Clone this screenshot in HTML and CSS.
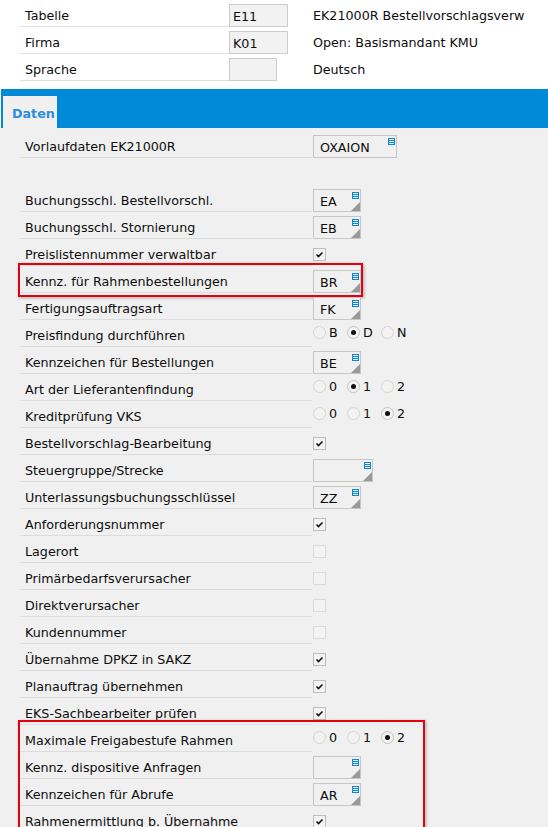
FILE: index.html
```html
<!DOCTYPE html>
<html lang="de">

<head>
  <meta charset="UTF-8">
  <title>Parameter EK21000R</title>
  <link rel="stylesheet" href="styles.css">
</head>

<body>
  <div id="head">
    <div class="hrow">
      <div class="hlabel">Tabelle</div>
      <div class="hcell"><div class="hbox">E11</div></div>
      <div class="hdesc">EK21000R Bestellvorschlagsverw</div>
    </div>
    <div class="hrow">
      <div class="hlabel">Firma</div>
      <div class="hcell"><div class="hbox">K01</div></div>
      <div class="hdesc">Open: Basismandant KMU</div>
    </div>
    <div class="hrow">
      <div class="hlabel">Sprache</div>
      <div class="hcell"><div class="hbox small"></div></div>
      <div class="hdesc">Deutsch</div>
    </div>
  </div>

  <div id="tab-bar">
    <div class="tab">Daten</div>
  </div>

  <div id="content">
    <!-- rows are rendered by the script below -->
  </div>

  <script>
    const rows = [
      { label: 'Vorlaufdaten EK21000R', type: 'box', value: 'OXAION', width: 84, noCorner: true },
      { type: 'blank' },
      { label: 'Buchungsschl. Bestellvorschl.', type: 'box', value: 'EA' },
      { label: 'Buchungsschl. Stornierung', type: 'box', value: 'EB' },
      { label: 'Preislistennummer verwaltbar', type: 'check', checked: true },
      { label: 'Kennz. für Rahmenbestellungen', type: 'box', value: 'BR', mark: 1 },
      { label: 'Fertigungsauftragsart', type: 'box', value: 'FK' },
      { label: 'Preisfindung durchführen', type: 'radio', options: ['B', 'D', 'N'], selected: 'D' },
      { label: 'Kennzeichen für Bestellungen', type: 'box', value: 'BE' },
      { label: 'Art der Lieferantenfindung', type: 'radio', options: ['0', '1', '2'], selected: '1' },
      { label: 'Kreditprüfung VKS', type: 'radio', options: ['0', '1', '2'], selected: '2' },
      { label: 'Bestellvorschlag-Bearbeitung', type: 'check', checked: true },
      { label: 'Steuergruppe/Strecke', type: 'box', value: '', width: 60 },
      { label: 'Unterlassungsbuchungsschlüssel', type: 'box', value: 'ZZ' },
      { label: 'Anforderungsnummer', type: 'check', checked: true },
      { label: 'Lagerort', type: 'check', checked: false },
      { label: 'Primärbedarfsverursacher', type: 'check', checked: false },
      { label: 'Direktverursacher', type: 'check', checked: false },
      { label: 'Kundennummer', type: 'check', checked: false },
      { label: 'Übernahme DPKZ in SAKZ', type: 'check', checked: true },
      { label: 'Planauftrag übernehmen', type: 'check', checked: true },
      { label: 'EKS-Sachbearbeiter prüfen', type: 'check', checked: true },
      { label: 'Maximale Freigabestufe Rahmen', type: 'radio', options: ['0', '1', '2'], selected: '2', mark: 2 },
      { label: 'Kennz. dispositive Anfragen', type: 'box', value: '', mark: 2 },
      { label: 'Kennzeichen für Abrufe', type: 'box', value: 'AR', mark: 2 },
      { label: 'Rahmenermittlung b. Übernahme', type: 'check', checked: true, mark: 2 }
    ];

    const listIcon = `<svg class="list-icon" width="7" height="7" viewBox="0 0 7 7">
        <rect x="0.5" y="0.5" width="6" height="6" fill="none" stroke="#0a86da"/>
        <path d="M0 2.5H7M0 4.5H7" stroke="#0a86da"/>
      </svg>`;

    const checkMark = `<svg width="11" height="11" viewBox="0 0 11 11">
        <path d="M2.5 5.5L4.5 7.5L8.5 3.5" fill="none" stroke="#111" stroke-width="1.6"/>
      </svg>`;

    function renderControl(row) {
      if (row.type === 'box') {
        return `<div class="box" style="width: ${row.width || 48}px">
            ${row.value}${listIcon}${row.noCorner ? '' : '<span class="corner"></span>'}
          </div>`;
      }
      if (row.type === 'check') {
        return `<div class="check ${row.checked ? 'on' : ''}">${row.checked ? checkMark : ''}</div>`;
      }
      if (row.type === 'radio') {
        return `<div class="radios">` + row.options.map(o => `
            <div class="opt"><span class="radio ${o === row.selected ? 'on' : ''}"></span>${o}</div>`).join('') +
          `</div>`;
      }
      return '';
    }

    function renderRow(row) {
      const rowDiv = document.createElement('div');
      rowDiv.classList.add('row');
      if (row.type === 'blank') {
        rowDiv.classList.add('blank');
        return rowDiv;
      }
      rowDiv.innerHTML = `
          <div class="label">${row.label}</div>
          <div class="ctrl">${renderControl(row)}</div>
        `;
      return rowDiv;
    }

    function renderContent() {
      const contentDiv = document.getElementById('content');
      contentDiv.innerHTML = '';
      let group = null;
      let groupId = null;
      rows.forEach(row => {
        if (row.mark) {
          if (groupId !== row.mark) {
            group = document.createElement('div');
            group.classList.add('mark', 'mark-' + row.mark);
            contentDiv.appendChild(group);
            groupId = row.mark;
          }
          group.appendChild(renderRow(row));
        } else {
          groupId = null;
          contentDiv.appendChild(renderRow(row));
        }
      });
    }

    renderContent();
  </script>
</body>

</html>
```

FILE: styles.css
```css
html {
  overflow: hidden;
}

body {
  margin: 0;
  background-color: #ffffff;
  color: #0d0d0d;
  font-family: "DejaVu Sans", Verdana, sans-serif;
  font-size: 12.7px;
}

#head {
  padding-left: 20px;
}

.hrow {
  display: flex;
  height: 27px;
}

.hlabel {
  width: 209px;
  height: 27px;
  box-sizing: border-box;
  padding: 4px 0 0 5px;
  display: flex;
  align-items: center;
  border-bottom: 1px solid #e0e0e0;
}

.hcell {
  width: 84px;
}

.hbox {
  margin-top: 4px;
  width: 59px;
  height: 23px;
  box-sizing: border-box;
  padding: 2px 0 0 3px;
  display: flex;
  align-items: center;
  border: 1px solid #cccccc;
  background-color: #f2f2f2;
}

.hbox.small {
  width: 48px;
}

.hdesc {
  display: flex;
  align-items: center;
  padding-top: 4px;
}

#tab-bar {
  margin: 8px 0 0 1px;
  height: 39px;
  padding-left: 2px;
  display: flex;
  align-items: flex-end;
  background-color: #0089d6;
}

.tab {
  width: 54px;
  height: 32px;
  box-sizing: border-box;
  padding: 2px 0 0 9px;
  display: flex;
  align-items: center;
  background-color: #f0f0f0;
  color: #2c8edd;
  font-weight: bold;
}

#content {
  background-color: #f0f0f0;
  padding: 3px 0 0 20px;
  min-height: 720px;
}

.row {
  display: flex;
  height: 27px;
}

.label {
  width: 292px;
  height: 27px;
  box-sizing: border-box;
  padding: 4px 0 0 5px;
  display: flex;
  align-items: center;
  border-bottom: 1px solid #dcdcdc;
}

.ctrl {
  margin-left: 1px;
}

.box {
  position: relative;
  margin-top: 4px;
  height: 23px;
  box-sizing: border-box;
  padding: 2px 0 0 6px;
  display: flex;
  align-items: center;
  border: 1px solid #c6c6c6;
  background-color: #f0f0f0;
}

.list-icon {
  position: absolute;
  top: 2px;
  right: 1px;
}

.corner {
  position: absolute;
  right: 0;
  bottom: 0;
  width: 0;
  height: 0;
  border-left: 9px solid transparent;
  border-bottom: 9px solid #999999;
}

.check {
  margin-top: 9px;
  width: 13px;
  height: 13px;
  box-sizing: border-box;
  display: flex;
  align-items: center;
  justify-content: center;
  border: 1px solid #dadada;
  background-color: #f3f3f3;
}

.check.on {
  border-color: #bdbdbd;
}

.radios {
  display: flex;
  margin-top: 6px;
}

.opt {
  width: 34px;
  height: 13px;
  display: flex;
  align-items: center;
  gap: 3px;
}

.radio {
  position: relative;
  width: 13px;
  height: 13px;
  box-sizing: border-box;
  border: 1px solid #d4d4d4;
  border-radius: 50%;
  background-color: #f2f2f2;
}

.radio.on {
  border-color: #c4c4c4;
}

.radio.on::after {
  content: "";
  position: absolute;
  left: 3px;
  top: 3px;
  width: 5px;
  height: 5px;
  border-radius: 50%;
  background-color: #111111;
}

.mark {
  position: relative;
}

.mark::after {
  content: "";
  position: absolute;
  left: -2px;
  box-sizing: border-box;
  border: 2px solid #e3000f;
  box-shadow: 1px 1px 3px rgba(0, 0, 0, 0.3);
  pointer-events: none;
}

.mark-1::after {
  top: -3px;
  width: 345px;
  height: 34px;
}

.mark-2::after {
  top: -5px;
  width: 407px;
  height: 116px;
}
```
